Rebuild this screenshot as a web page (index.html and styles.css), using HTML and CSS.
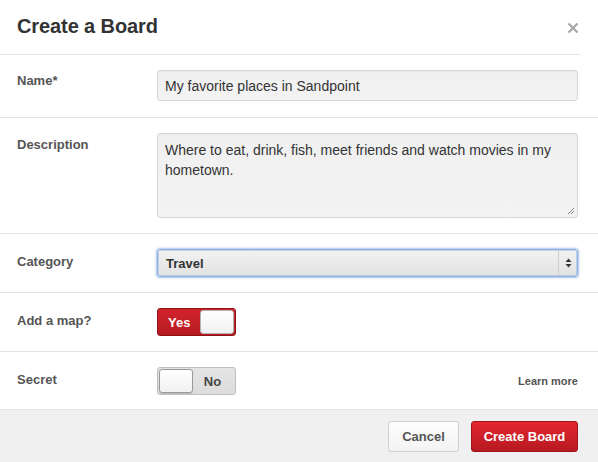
FILE: index.html
```html
<!DOCTYPE html>
<html>
<head>
<meta charset="utf-8">
<link rel="stylesheet" href="styles.css">
</head>
<body>
<div class="modal">
  <div class="header">
    <h1 class="title">Create a Board</h1>
    <svg class="close" width="12" height="12" viewBox="0 0 12 12"><path d="M1.5 1.5L10.5 10.5M10.5 1.5L1.5 10.5" stroke="#a9a9a9" stroke-width="2.4" stroke-linecap="butt"/></svg>
  </div>
  <div class="row row-name">
    <div class="label">Name*</div>
    <div class="field">
      <div class="input">My favorite places in Sandpoint</div>
    </div>
  </div>
  <div class="row row-desc">
    <div class="label">Description</div>
    <div class="field">
      <div class="textarea">Where to eat, drink, fish, meet friends and watch movies in my hometown.
        <svg class="grip" width="8" height="8" viewBox="0 0 8 8"><path d="M7 1L1 7M7 4L4 7" stroke="#888" stroke-width="1"/></svg>
      </div>
    </div>
  </div>
  <div class="row row-cat">
    <div class="label">Category</div>
    <div class="field">
      <div class="select">
        <span class="select-text">Travel</span>
        <span class="select-arrows">
          <svg width="7" height="10" viewBox="0 0 7 10"><path d="M3.5 0.5L6.5 4H0.5Z M3.5 9.5L6.5 6H0.5Z" fill="#333"/></svg>
        </span>
      </div>
    </div>
  </div>
  <div class="row row-map">
    <div class="label">Add a map?</div>
    <div class="field">
      <div class="toggle on"><span class="toggle-text">Yes</span><span class="knob"></span></div>
    </div>
  </div>
  <div class="row row-secret">
    <div class="label">Secret</div>
    <div class="field field-split">
      <div class="toggle off"><span class="knob"></span><span class="toggle-text">No</span></div>
      <span class="learn">Learn more</span>
    </div>
  </div>
  <div class="footer">
    <button class="btn btn-cancel">Cancel</button>
    <button class="btn btn-primary">Create Board</button>
  </div>
</div>
</body>
</html>
```
FILE: styles.css
```css
* { box-sizing: border-box; }
html, body { margin: 0; padding: 0; background: #fff; }
body {
  font-family: "Liberation Sans", Arial, Helvetica, sans-serif;
  color: #333;
  width: 598px;
  height: 462px;
  overflow: hidden;
}
.modal { display: flex; flex-direction: column; height: 462px; }
.header {
  display: flex;
  align-items: center;
  justify-content: space-between;
  height: 55px;
  margin-right: 18px;
  padding: 0 0 2px 17px;
  border-bottom: 1px solid #e3e3e3;
}
.title {
  margin: 0;
  font-size: 20px;
  font-weight: bold;
  color: #333;
  letter-spacing: -0.1px;
}
.close {
  display: block;
  margin-right: 1px;
  margin-top: 4px;
}
.row {
  display: flex;
  align-items: flex-start;
  padding: 15px 20px 15px 17px;
  border-bottom: 1px solid #e3e3e3;
}
.row-name { padding-top: 15px; padding-bottom: 16px; }
.row-cat { padding-top: 15px; padding-bottom: 15px; }
.row-secret { padding-bottom: 14px; }
.label {
  width: 140px;
  flex: none;
  font-size: 13px;
  font-weight: bold;
  color: #555;
  line-height: 18px;
  padding-top: 3px;
}
.row-name .label { padding-top: 2px; }
.row-desc .label { padding-top: 3px; }
.row-cat .label { padding-top: 4px; }
.row-map .label, .row-secret .label { padding-top: 4px; }
.field { flex: 1; }
.field-split { display: flex; align-items: center; justify-content: space-between; }
.input, .textarea {
  width: 421px;
  border: 1px solid #d6d6d6;
  border-radius: 3px;
  background: linear-gradient(#f0f0f0, #f3f3f3);
  box-shadow: inset 0 1px 1px rgba(0,0,0,0.04);
  font-size: 14px;
  color: #333;
  padding: 0 7px;
}
.input { height: 31px; line-height: 30px; }
.textarea {
  position: relative;
  height: 85px;
  line-height: 20px;
  padding-top: 6px;
  padding-right: 16px;
}
.grip { position: absolute; right: 2px; bottom: 2px; }
.select {
  display: flex;
  align-items: center;
  width: 421px;
  height: 28px;
  border: 1px solid #8eb3e0;
  border-radius: 3px;
  background: linear-gradient(#f2f2f2, #e2e2e2);
  box-shadow: 0 0 2px 1px rgba(100,150,220,0.55), inset 0 0 0 1px rgba(160,190,230,0.6);
}
.select-text {
  flex: 1;
  font-size: 13px;
  font-weight: bold;
  color: #333;
  padding-left: 8px;
}
.select-arrows {
  width: 19px;
  height: 100%;
  border-left: 1px solid #cfcfcf;
  display: flex;
  align-items: center;
  justify-content: center;
}
.select-arrows svg { display: block; }
.toggle {
  display: flex;
  align-items: center;
  width: 79px;
  height: 28px;
  border-radius: 3px;
  padding: 1px;
  font-size: 13px;
  font-weight: bold;
}
.toggle.on {
  background: linear-gradient(#d3232b, #b61b22);
  border: 1px solid #8f1218;
  color: #fff;
  justify-content: space-between;
}
.toggle.off {
  background: linear-gradient(#e4e4e4, #dcdcdc);
  border: 1px solid #bdbdbd;
  color: #444;
}
.toggle-text { flex: 1; text-align: center; }
.toggle.on .toggle-text { text-align: left; padding-left: 9px; }
.toggle.off .toggle-text { padding-right: 2px; }
.knob {
  width: 34px;
  height: 24px;
  border-radius: 3px;
  background: linear-gradient(#ffffff, #f1f1f1);
  border: 1px solid #b3b3b3;
  flex: none;
}
.toggle.off .knob { border-color: #999; box-shadow: 0 1px 0 rgba(0,0,0,0.15); }
.learn {
  font-size: 11px;
  font-weight: bold;
  color: #555;
}
.footer {
  flex: 1;
  display: flex;
  justify-content: flex-end;
  align-items: flex-start;
  gap: 12px;
  padding: 11px 20px 0 0;
  background: #f0f0f0;
}
.btn {
  height: 31px;
  border-radius: 3px;
  font-family: "Liberation Sans", Arial, Helvetica, sans-serif;
  font-size: 13px;
  font-weight: bold;
  padding: 0;
  cursor: pointer;
}
.btn-cancel {
  width: 71px;
  background: linear-gradient(#fdfdfd, #f3f3f3);
  border: 1px solid #cfcfcf;
  color: #555;
}
.btn-primary {
  width: 107px;
  background: linear-gradient(#e3262f, #b71a21);
  border: 1px solid #9e141a;
  color: #fff;
}
```
